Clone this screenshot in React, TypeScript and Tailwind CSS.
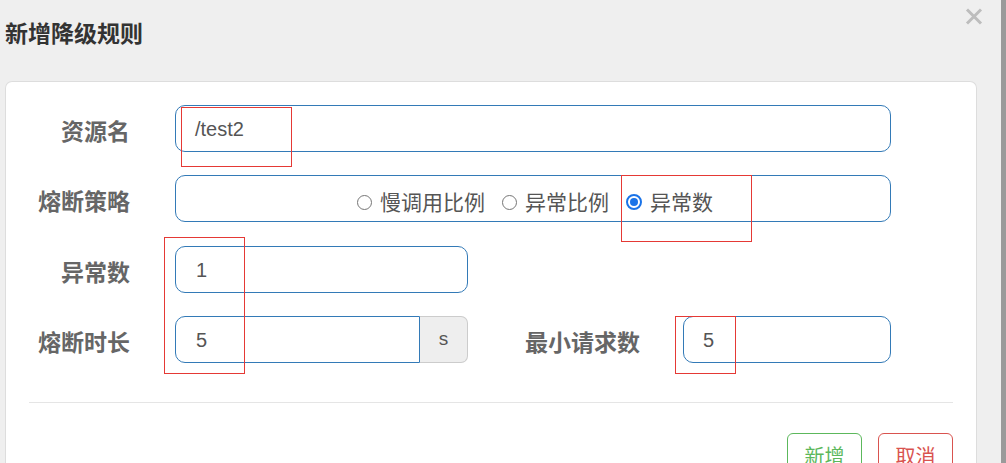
import React from 'react';

const cjk = '"Liberation Sans", "Noto Sans CJK SC", sans-serif';

function Radio({ label, checked }: { label: string; checked?: boolean }) {
  return (
    <label className="flex items-center pt-[7px]">
      {checked ? (
        <span className="w-[16px] h-[16px] shrink-0 rounded-full border-[2px] border-[#1a73e8] flex items-center justify-center bg-white">
          <span className="w-[8px] h-[8px] rounded-full bg-[#1a73e8]" />
        </span>
      ) : (
        <span className="w-[15px] h-[15px] shrink-0 rounded-full border-[1.5px] border-[#767676] bg-white" />
      )}
      <span className="ml-[8px] text-[21px] text-[#555] leading-none">{label}</span>
    </label>
  );
}

function Label({ text, width }: { text: string; width: string }) {
  return (
    <div className={`${width} pt-[8px] text-right text-[23px] font-bold text-[#666] leading-none`}>{text}</div>
  );
}

export default function App() {
  return (
    <div
      className="relative w-[1006px] h-[463px] overflow-hidden bg-[#efefef] flex"
      style={{ fontFamily: cjk }}
    >
      <div className="flex-1 flex flex-col min-h-0">
        {/* header */}
        <div className="h-[81px] shrink-0 flex items-start justify-between">
          <h2 className="mt-[20px] ml-[5px] text-[23px] font-bold text-[#333] leading-[28px]">新增降级规则</h2>
          <button className="mt-[8px] mr-[18px]">
            <svg width="18" height="17" viewBox="0 0 18 17">
              <path d="M2 1.5 L16 15.5 M16 1.5 L2 15.5" stroke="#bdbdbd" strokeWidth="3" />
            </svg>
          </button>
        </div>

        {/* card */}
        <div className="ml-[5px] w-[972px] flex-1 shrink-0 bg-white border border-[#ddd] border-b-0 rounded-t-[7px]">
          <div className="pt-[23px] flex flex-col gap-[23px]">
            <div className="flex items-center">
              <Label text="资源名" width="w-[124px]" />
              <div className="ml-[45px] w-[716px] h-[47px] border border-[#337ab7] rounded-[10px] flex items-center pl-[19px] text-[20px] text-[#555]">
                /test2
              </div>
            </div>

            <div className="flex items-center">
              <Label text="熔断策略" width="w-[124px]" />
              <div className="ml-[45px] w-[716px] h-[47px] border border-[#337ab7] rounded-[10px] flex items-center justify-center gap-[17px] pl-[4px]">
                <Radio label="慢调用比例" />
                <Radio label="异常比例" />
                <Radio label="异常数" checked />
              </div>
            </div>

            <div className="flex items-center mt-[1px]">
              <Label text="异常数" width="w-[124px]" />
              <div className="ml-[45px] w-[293px] h-[47px] border border-[#337ab7] rounded-[10px] flex items-center pl-[20px] text-[20px] text-[#555]">
                1
              </div>
            </div>

            <div className="flex items-center">
              <Label text="熔断时长" width="w-[124px]" />
              <div className="ml-[45px] flex h-[47px]">
                <div className="w-[245px] border border-[#337ab7] rounded-l-[10px] flex items-center pl-[20px] text-[20px] text-[#555]">
                  5
                </div>
                <div className="w-[48px] bg-[#eee] border border-l-0 border-[#ccc] rounded-r-[7px] flex items-center justify-center text-[19px] text-[#555]">
                  s
                </div>
              </div>
              <Label text="最小请求数" width="w-[172px]" />
              <div className="ml-[43px] w-[208px] h-[47px] border border-[#337ab7] rounded-[10px] flex items-center pl-[19px] text-[20px] text-[#555]">
                5
              </div>
            </div>
          </div>

          <div className="mt-[39px] mx-[23px] h-px bg-[#e5e5e5]" />

          <div className="mt-[30px] flex justify-end gap-[16px] mr-[23px]">
            <button className="w-[75px] h-[42px] border border-[#5cb85c] rounded-[6px] text-[20px] text-[#5cb85c] pt-[8px] flex items-start justify-center">
              新增
            </button>
            <button className="w-[75px] h-[42px] border border-[#d9534f] rounded-[6px] text-[20px] text-[#d9534f] pt-[8px] flex items-start justify-center">
              取消
            </button>
          </div>
        </div>
      </div>

      {/* scrollbar edge */}
      <div className="w-[5px] bg-[#9a9a9a]" />

      {/* red annotation boxes */}
      <div className="absolute left-[181px] top-[107px] w-[111px] h-[60px] border border-[#e53935]" />
      <div className="absolute left-[621px] top-[175px] w-[131px] h-[67px] border border-[#e53935]" />
      <div className="absolute left-[164px] top-[237px] w-[81px] h-[137px] border border-[#e53935]" />
      <div className="absolute left-[675px] top-[316px] w-[61px] h-[58px] border border-[#e53935]" />
    </div>
  );
}
